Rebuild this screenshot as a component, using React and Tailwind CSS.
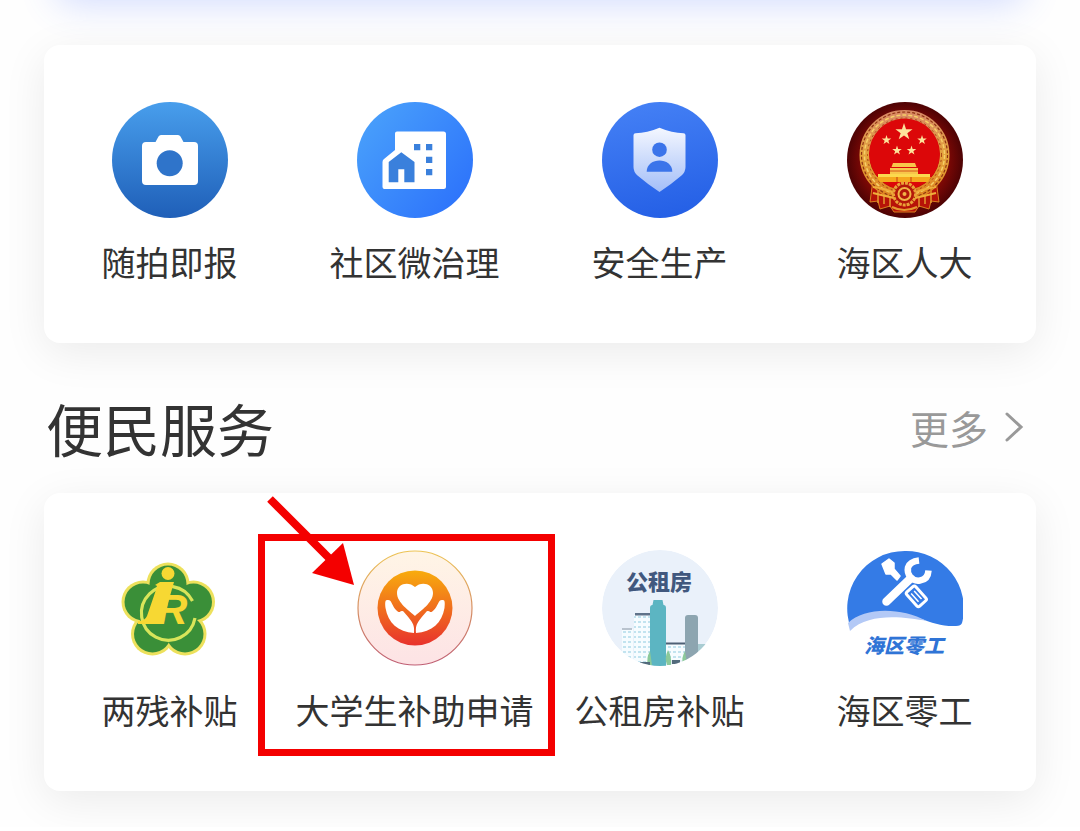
import clsx from 'clsx';

const cjk = "font-['Noto_Sans_CJK_SC',sans-serif]";

function CameraIcon() {
  return (
    <svg viewBox="0 0 116 116" className="size-full" aria-hidden="true">
      <defs>
        <linearGradient id="camera" x1="0" y1="0" x2="0" y2="1">
          <stop offset="0" stopColor="#489eec" />
          <stop offset="1" stopColor="#1f5fb8" />
        </linearGradient>
      </defs>
      <circle cx="58" cy="58" r="58" fill="url(#camera)" />
      <path d="M34 40h9.500l3-5.500q.8-1.500 2.500-1.500h17q1.700 0 2.500 1.500l3 5.500H82q4 0 4 4v35q0 4-4 4H34q-4 0-4-4V44q0-4 4-4z" fill="#fff" />
      <circle cx="57.700" cy="61.300" r="13" fill="#2f74ca" />
    </svg>
  );
}

function CommunityIcon() {
  return (
    <svg viewBox="0 0 116 116" className="size-full" aria-hidden="true">
      <defs>
        <linearGradient id="community" x1="0" y1="0.100" x2="1" y2="0.900">
          <stop offset="0" stopColor="#4aa2fb" />
          <stop offset="1" stopColor="#2b70fb" />
        </linearGradient>
      </defs>
      <circle cx="58" cy="58" r="58" fill="url(#community)" />
      <path d="M40 29.500h46.500q2.500 0 2.500 2.500v52.500q0 2.500-2.500 2.500h-59q-2 0-2-2V60q0-2 1.500-3l11-9V31.500q0-2 2-2z" fill="#fff" />
      <path d="M44.300 50.300 57.500 60v20.300H47.300v-13h-6v13h-9.600V60z" fill="#3a80dc" />
      <path d="M57 42h6.300v6.300H57zM69 42h6.300v6.300H69zM69 54.700h6.300V61H69zM69 67h6.300v6.300H69z" fill="#3a80dc" />
    </svg>
  );
}

function SafetyIcon() {
  return (
    <svg viewBox="0 0 116 116" className="size-full" aria-hidden="true">
      <defs>
        <linearGradient id="safety" x1="0.300" y1="0" x2="0.500" y2="1">
          <stop offset="0" stopColor="#4480f5" />
          <stop offset="1" stopColor="#2560e6" />
        </linearGradient>
        <linearGradient id="shield" x1="0" y1="0" x2="0" y2="1">
          <stop offset="0" stopColor="#f4f7ff" />
          <stop offset="1" stopColor="#a3bef8" />
        </linearGradient>
      </defs>
      <circle cx="58" cy="58" r="58" fill="url(#safety)" />
      <path d="M57.500 25.700Q70 31 81.500 31.200q2 0 2 2V65q0 5-4 8.500Q69 82.500 57.500 90 46 82.500 35.500 73.500q-4-3.500-4-8.500V33.200q0-2 2-2Q45 31 57.500 25.700z" fill="url(#shield)" />
      <circle cx="57.500" cy="47.700" r="7.300" fill="#3b74ea" />
      <path d="M44.700 69.700c0-15 25.600-15 25.600 0z" fill="#3b74ea" />
    </svg>
  );
}

const star = '0,-10 2.300,-3.100 9.500,-3.100 3.700,1.300 5.900,8.100 0,4 -5.900,8.100 -3.700,1.300 -9.500,-3.100 -2.300,-3.100';

const stars = [
  [57, 30, 0.9],
  [39.5, 38, 0.5],
  [75, 38, 0.5],
  [50, 48.5, 0.5],
  [64.5, 48.5, 0.5],
];

function EmblemIcon() {
  return (
    <svg viewBox="0 0 116 116" className="size-full" aria-hidden="true">
      <defs>
        <radialGradient id="emblem">
          <stop offset="0.600" stopColor="#970b06" />
          <stop offset="1" stopColor="#4d0304" />
        </radialGradient>
        <linearGradient id="wreath" x1="0" y1="0" x2="0" y2="1">
          <stop offset="0" stopColor="#d98a62" />
          <stop offset="0.500" stopColor="#e3a33c" />
          <stop offset="1" stopColor="#dd8420" />
        </linearGradient>
      </defs>
      <circle cx="58" cy="58" r="58" fill="url(#emblem)" />
      <path d="M26 78l-3 22 8-1 2 8 10-3 4 6h21l4-6 10 3 2-8 8 1-3-22z" fill="#b71308" stroke="#d9821f" strokeWidth="1" />
      <path d="M31 80v21M37 84v18M43 86v19M72 86v19M78 84v18M84 80v21" stroke="#e59a30" strokeWidth="1.500" />
      <circle cx="57.500" cy="53" r="40" fill="none" stroke="url(#wreath)" strokeWidth="10" />
      <circle cx="57.500" cy="53" r="43" fill="none" stroke="#8f3212" strokeWidth="1.200" strokeDasharray="3 2" />
      <circle cx="57.500" cy="53" r="40" fill="none" stroke="#f6cf68" strokeWidth="1.500" strokeDasharray="4 2" />
      <circle cx="57.500" cy="53" r="37" fill="none" stroke="#a84316" strokeWidth="1" strokeDasharray="2 3" />
      <circle cx="57.500" cy="52" r="35.500" fill="#dc0709" />
      {stars.map(([x, y, s]) => (
        <polygon key={`${x}-${y}`} points={star} fill="#fde39a" transform={`translate(${x} ${y}) scale(${s})`} />
      ))}
      <path d="M46 61h22l1.500 4h-25zM43 66h28v6H43z" fill="#f8c64a" />
      <path d="M43 69h28" stroke="#d4531a" strokeWidth="1" />
      <path d="M31 72h52v3H31z" fill="#fbd94e" />
      <path d="M30 75h54l-3 5H33z" fill="#f6a81d" />
      <path d="M50 80v-5M64 80v-5" stroke="#c83c10" strokeWidth="1" />
      <path d="M26 85q14 2 21 6M89 85q-14 2-21 6M26 91q12 3 21 5M89 91q-12 3-21 5" fill="none" stroke="#efae3b" strokeWidth="2" />
      <circle cx="57.500" cy="92" r="11" fill="#b3180a" stroke="#eaa238" strokeWidth="3" strokeDasharray="3 1" />
      <circle cx="57.500" cy="92" r="6" fill="none" stroke="#f1b446" strokeWidth="2" />
      <circle cx="57.500" cy="92" r="2" fill="#f1b446" />
      <path d="M45 105q12 6 25 0" fill="none" stroke="#e59a30" strokeWidth="2" />
    </svg>
  );
}

const petals = [[56, 34], [31, 52], [81.5, 52], [40.5, 84], [73, 84]];

function DisabilityIcon() {
  return (
    <svg viewBox="0 0 116 116" className="size-full" aria-hidden="true">
      {petals.map(([x, y]) => (
        <circle key={`o${x}`} cx={x} cy={y} r="21.500" fill="#ede15c" />
      ))}
      {petals.map(([x, y]) => (
        <circle key={`i${x}`} cx={x} cy={y} r="18.500" fill="#3a8f38" />
      ))}
      <circle cx="56.500" cy="60" r="25" fill="#3a8f38" />
      <path d="M80.500 51A27 27 0 1 0 83 68" fill="none" stroke="#d9e55a" strokeWidth="3.200" />
      <circle cx="56" cy="23.500" r="6.500" fill="#f7d833" />
      <path d="M48 32h14L50 74H26v-3q7 0 9-5l10-29q0-2-2-2z" fill="#f7d833" />
      <text x="45" y="74" fontFamily="Liberation Sans, sans-serif" fontSize="42" fontWeight="700" fontStyle="italic" fill="#f7d833">R</text>
    </svg>
  );
}

function CareIcon() {
  return (
    <svg viewBox="0 0 116 116" className="size-full" aria-hidden="true">
      <defs>
        <linearGradient id="careBg" x1="0" y1="0" x2="0" y2="1">
          <stop offset="0" stopColor="#fff5e6" />
          <stop offset="1" stopColor="#fde3e5" />
        </linearGradient>
        <linearGradient id="careEdge" x1="0" y1="0" x2="0" y2="1">
          <stop offset="0" stopColor="#edc455" />
          <stop offset="1" stopColor="#bf5d73" />
        </linearGradient>
        <linearGradient id="care" x1="0" y1="0" x2="0" y2="1">
          <stop offset="0" stopColor="#f8ac0d" />
          <stop offset="1" stopColor="#e8322d" />
        </linearGradient>
      </defs>
      <circle cx="58" cy="58" r="57" fill="url(#careBg)" stroke="url(#careEdge)" strokeWidth="1.200" />
      <circle cx="58" cy="58" r="37.500" fill="url(#care)" />
      <path d="M58 66C53 61 40 53 40 43c0-10 12-12 18-6 6-6 18-4 18 6 0 10-13 18-18 23z" fill="#fff" />
      <path d="M30 50c-2 0-2 3-1.500 8C31 73 41 82 57 83c.5-6-.5-9-3.500-13-2-3-4-5-7-8.500-3-1.500-3 1-5 .5-4-2-6-8-8-11q-1-1.200-3-1z" fill="#fff" />
      <path d="M86 50c2 0 2 3 1.500 8C85 73 75 82 59 83c-.5-6 .5-9 3.500-13 2-3 4-5 7-8.500 3-1.500 3 1 5 .5 4-2 6-8 8-11q1-1.200 3-1z" fill="#fff" />
    </svg>
  );
}

function RentalIcon() {
  return (
    <svg viewBox="0 0 116 116" className="size-full" aria-hidden="true">
      <defs>
        <clipPath id="rentalClip">
          <circle cx="58" cy="58" r="58" />
        </clipPath>
        <pattern id="panes" width="5" height="5" patternUnits="userSpaceOnUse">
          <path d="M0 0h5v5H0z" fill="#f6fcff" />
          <path d="M1 1h3v2H1z" fill="#c2e3ef" />
        </pattern>
      </defs>
      <g clipPath="url(#rentalClip)">
        <circle cx="58" cy="58" r="58" fill="#eaf1fa" />
        <path d="M20 79h11v37H20z" fill="url(#panes)" />
        <path d="M20 78h10v2H20z" fill="#b9c3ce" />
        <path d="M32 65h16v51H32z" fill="url(#panes)" />
        <path d="M33 63h15v2.500H33z" fill="#60738a" />
        <path d="M64 94h19v16H64z" fill="url(#panes)" />
        <path d="M64 92.500h19v2H64z" fill="#4e6075" />
        <path d="M83 68q0-3 3-3h7q3 0 3 3v48H83z" fill="#8da5b0" />
        <path d="M96 94h8v22h-8z" fill="#a9ccd2" />
        <path d="M51.500 50h9l1 5q2.500 0 2.500 3v58H48V58q0-3 2.500-3z" fill="#5cb5c2" />
        <path d="M48 101q-4 7-2 14h4zM66 100q-4 8-1 15h4q1-8-3-15zM83 101q-4 7-2 13h4z" fill="#8bc99a" />
        <path d="M38 112h10v3H38zM70 110h8v4h-8z" fill="#536b7c" />
      </g>
      <text x="57" y="40" textAnchor="middle" fontFamily="Noto Sans CJK SC, sans-serif" fontSize="22" fontWeight="900" fill="#41587e">公租房</text>
    </svg>
  );
}

function ToolsIcon() {
  return (
    <svg viewBox="0 0 116 116" className="size-full" aria-hidden="true">
      <path d="M4 79A57.500 57.500 0 0 1 58 1A57.500 57.500 0 0 1 115 73q-1 3-6 3C82 77 68 62 42 62 25 62 12 70 4 79z" fill="#347be6" />
      <path d="M1 73C18 57 53 57 80 71c-23-4-58-9-77 10z" fill="#b3c9f6" />
      <path d="M35 14l7-5 5 4v6l6 7-3 4-6-6h-5z" fill="#fff" strokeLinejoin="round" stroke="#fff" strokeWidth="1.500" />
      <path d="M39.500 51.500 63 29" stroke="#fff" strokeWidth="8.500" strokeLinecap="round" />
      <path d="M72 10.500q-9 1-11 7-1 5 2 9 4 5 10 4 8-1 8.500-10" fill="none" stroke="#fff" strokeWidth="6.500" />
      <g transform="rotate(-42 69 46)">
        <rect x="63" y="37" width="12" height="19" rx="2" fill="#347be6" stroke="#fff" strokeWidth="3" />
        <path d="M67 41v11M71 41v11" stroke="#fff" strokeWidth="1.500" />
      </g>
      <text x="57" y="103" textAnchor="middle" fontFamily="Noto Sans CJK SC, sans-serif" fontSize="20" fontWeight="900" fontStyle="italic" fill="#2f74d6">海区零工</text>
    </svg>
  );
}

// red frame and arrow drawn over the highlighted service
function Callout() {
  return (
    <div className="pointer-events-none absolute -top-4 -right-[18px] -bottom-5 -left-[34px] border-[7px] border-[#f40000]">
      <svg viewBox="0 0 90 94" className="absolute -top-12 left-0 h-[94px] w-[90px]" aria-hidden="true">
        <path d="M5 6 70 71" stroke="#f40000" strokeWidth="8" />
        <path d="M89 92 78 50 47 80z" fill="#f40000" />
      </svg>
    </div>
  );
}

const governance = [
  { label: '随拍即报', icon: CameraIcon },
  { label: '社区微治理', icon: CommunityIcon },
  { label: '安全生产', icon: SafetyIcon },
  { label: '海区人大', icon: EmblemIcon },
];

const services = [
  { label: '两残补贴', icon: DisabilityIcon },
  { label: '大学生补助申请', icon: CareIcon, highlighted: true },
  { label: '公租房补贴', icon: RentalIcon },
  { label: '海区零工', icon: ToolsIcon },
];

function ServiceCard({ items }) {
  return (
    <nav className="mx-11 grid grid-cols-4 rounded-2xl bg-white pt-[57px] pr-[9px] pb-[55px] pl-[3px] shadow-[0_10px_44px_rgba(0,0,0,0.08)]">
      {items.map(({ label, icon: Icon, highlighted }) => (
        <a key={label} href="#" className="relative flex flex-col items-center gap-5">
          <span className="size-[116px]">
            <Icon />
          </span>
          <span className="pb-[2px] text-[34px] leading-[48px] whitespace-nowrap">{label}</span>
          {highlighted && <Callout />}
        </a>
      ))}
    </nav>
  );
}

export default function App() {
  return (
    <main className={clsx(cjk, 'flex flex-col overflow-hidden bg-[#fefefe] pb-9 text-[#333]')}>
      {/* bottom edge of the banner above the cards */}
      <div className="mx-14 -mt-20 mb-[45px] h-20 rounded-2xl shadow-[0_4px_36px_rgba(70,110,255,0.24)]" />

      <ServiceCard items={governance} />

      <header className="mx-11 mt-11 mb-[26px] flex items-center justify-between pr-3 pl-[2px]">
        <h2 className="text-[57px] leading-[80px]">便民服务</h2>
        <a href="#" className="flex items-center gap-4 text-[39px] leading-[80px] text-[#999]">
          更多
          <svg viewBox="0 0 20 32" className="h-8 w-5" fill="none" stroke="currentColor" strokeWidth="3" strokeLinecap="round" aria-hidden="true">
            <path d="M3 3l14 13L3 29" />
          </svg>
        </a>
      </header>

      <ServiceCard items={services} />
    </main>
  );
}
